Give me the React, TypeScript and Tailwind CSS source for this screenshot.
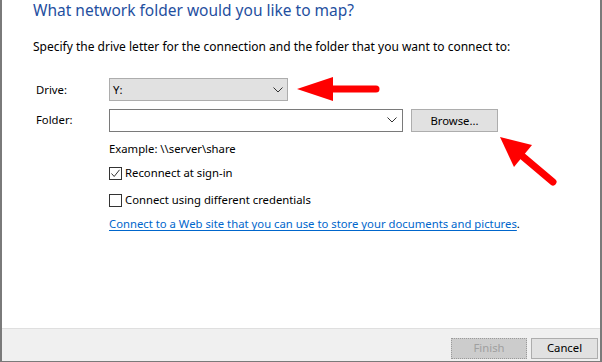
import React from "react";

const font = { fontFamily: '"Noto Sans", "Liberation Sans", sans-serif' };

function Chevron({ className = "" }: { className?: string }) {
  return (
    <svg width="10" height="6" viewBox="0 0 10 6" className={className}>
      <path d="M0.5 0.5 L5 5 L9.5 0.5" fill="none" stroke="#333" strokeWidth="1" />
    </svg>
  );
}

function Checkbox({ checked }: { checked?: boolean }) {
  return (
    <div className="w-[13px] h-[13px] border border-[#333] bg-white flex items-center justify-center shrink-0">
      {checked && (
        <svg width="11" height="11" viewBox="0 0 11 11">
          <path d="M1.5 5.5 L4.2 8.5 L9.5 1.8" fill="none" stroke="#333" strokeWidth="1" />
        </svg>
      )}
    </div>
  );
}

export default function App() {
  return (
    <div
      className="relative w-[602px] h-[362px] bg-white border-l-2 border-r-2 border-b border-[#7a7a7a] flex flex-col text-black overflow-hidden"
      style={font}
    >
      <div className="flex-1 pl-[31px] flex flex-col">
        <div className="h-[24px] flex items-center text-[15.5px] leading-none text-[#1f4fa0] -mt-[1px]">
          What network folder would you like to map?
        </div>
        <div className="mt-[16px] h-[16px] flex items-center text-[12px] leading-none">
          Specify the drive letter for the connection and the folder that you want to connect to:
        </div>

        <div className="mt-[23px] flex items-center h-[23px] text-[11.3px] leading-none">
          <div className="w-[76px] pl-[3px]">Drive:</div>
          <div className="w-[179px] h-[23px] bg-[#e1e1e1] border border-[#adadad] flex items-center justify-between pl-[3px] pr-[4px]">
            <span>Y:</span>
            <Chevron />
          </div>
        </div>

        <div className="mt-[7px] flex items-center h-[24px] text-[11.3px] leading-none">
          <div className="w-[76px] pl-[3px]">Folder:</div>
          <div className="w-[294px] h-[23px] bg-white border border-[#7a7a7a] flex items-center justify-end pr-[5px]">
            <Chevron />
          </div>
          <div className="ml-[8px] w-[87px] h-[23px] mt-[1px] bg-[#e1e1e1] border border-[#adadad] flex items-center justify-center">
            Browse...
          </div>
        </div>

        <div className="ml-[76px] flex flex-col text-[11.3px] leading-none">
          <div className="mt-[9px] h-[16px] flex items-center">Example: \\server\share</div>
          <div className="mt-[8px] h-[16px] flex items-center gap-[3px]">
            <Checkbox checked />
            <span>Reconnect at sign-in</span>
          </div>
          <div className="mt-[11px] h-[16px] flex items-center gap-[3px]">
            <Checkbox />
            <span>Connect using different credentials</span>
          </div>
          <div className="mt-[8px] h-[16px] flex items-center">
            <span className="text-[#0066cc] underline underline-offset-2">
              Connect to a Web site that you can use to store your documents and pictures
            </span>
            <span>.</span>
          </div>
        </div>
      </div>

      <div className="h-[33px] bg-[#f0f0f0] border-t border-[#dfdfdf] flex items-center justify-end pr-[2px] gap-[4px] text-[11.3px] leading-none">
        <div className="w-[76px] h-[21px] mt-[6px] bg-[#cccccc] border border-dotted border-[#9a9a9a] flex items-center justify-center text-[#a0a0a0]">
          Finish
        </div>
        <div className="w-[67px] h-[21px] mt-[6px] bg-[#e1e1e1] border border-[#adadad] flex items-center justify-center">
          Cancel
        </div>
      </div>

      <svg
        className="absolute left-[-2px] top-0 pointer-events-none"
        width="602"
        height="362"
        viewBox="0 0 602 362"
      >
        <polygon points="297,89 333,77 333,101" fill="#ff0000" />
        <line x1="330" y1="89" x2="376" y2="89" stroke="#ff0000" strokeWidth="7" strokeLinecap="round" />
        <polygon points="500,137 532,145 514,167" fill="#ff0000" />
        <line x1="521" y1="155" x2="553" y2="182" stroke="#ff0000" strokeWidth="7" strokeLinecap="round" />
      </svg>
    </div>
  );
}
